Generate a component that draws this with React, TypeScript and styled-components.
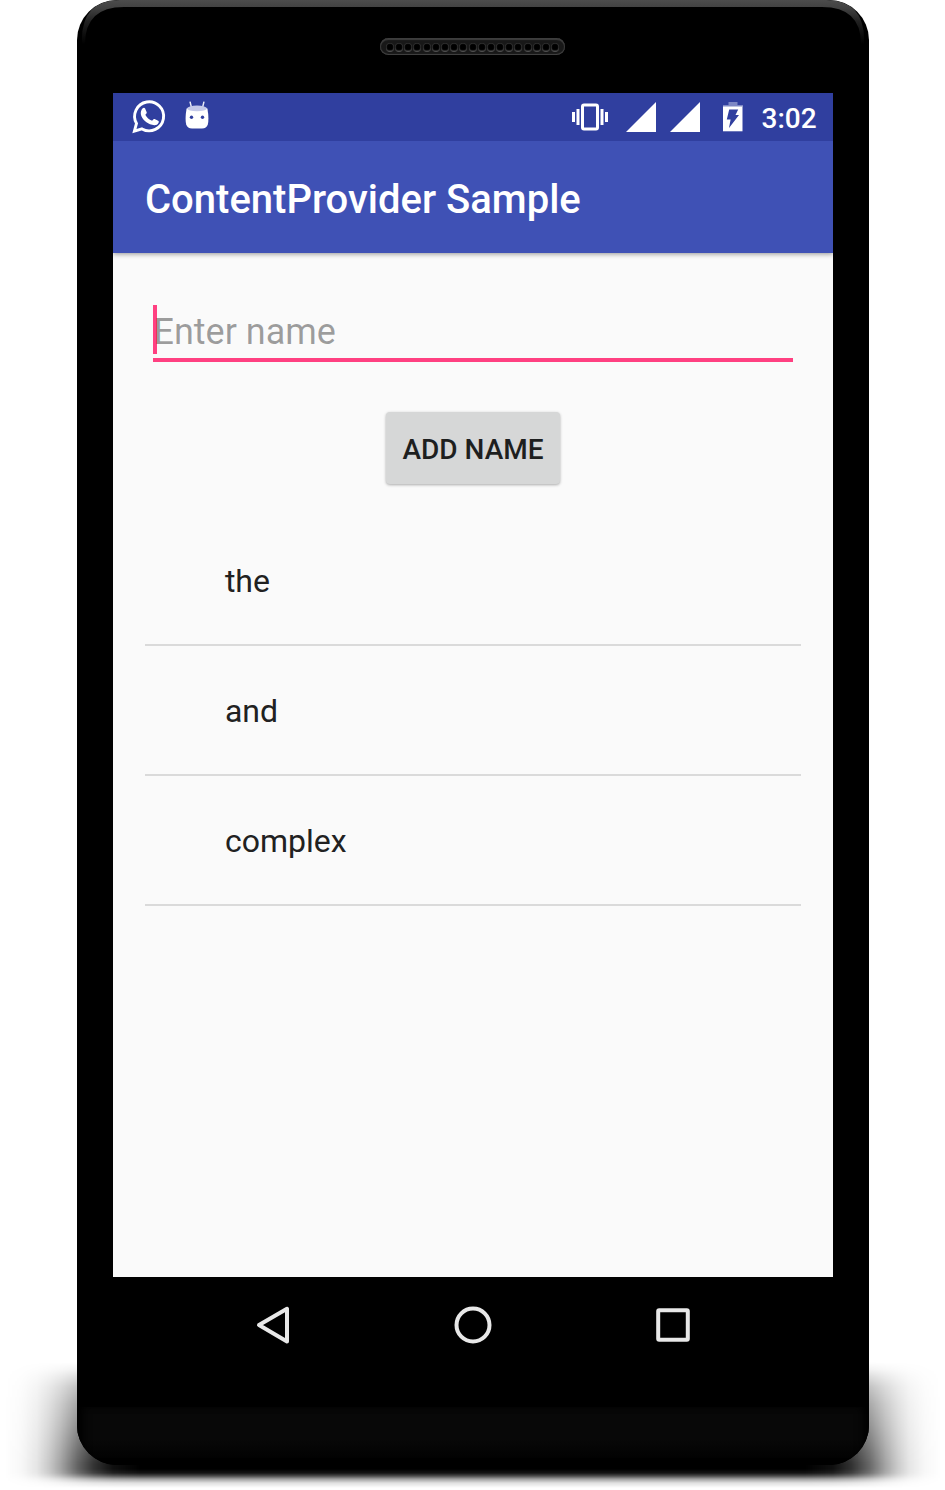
import React from "react";
import styled, { createGlobalStyle } from "styled-components";

const GlobalStyle = createGlobalStyle`
  *, *::before, *::after { box-sizing: border-box; }
  html, body { margin: 0; background: #fff; }
  body { font-family: Roboto, "Liberation Sans", sans-serif; overflow: hidden; }
`;

const Stage = styled.main`
  position: relative;
  display: flex;
  justify-content: center;
  width: 945px;
  height: 1490px;
  margin: 0 auto;
  background: #fff;
  overflow: hidden;
`;

const FloorShadow = styled.div`
  position: absolute;
  left: 0;
  right: 0;
  top: 1360px;
  height: 128px;
  background: linear-gradient(
    to right,
    rgba(0, 0, 0, 0) 5px,
    rgba(0, 0, 0, 0.03) 22px,
    rgba(0, 0, 0, 0.1) 37px,
    rgba(0, 0, 0, 0.21) 49px,
    rgba(0, 0, 0, 0.36) 61px,
    rgba(0, 0, 0, 0.6) 77px,
    rgba(0, 0, 0, 0.8) 94px,
    rgba(0, 0, 0, 0.94) 113px,
    #000 140px,
    #000 805px,
    rgba(0, 0, 0, 0.94) 833px,
    rgba(0, 0, 0, 0.8) 852px,
    rgba(0, 0, 0, 0.6) 869px,
    rgba(0, 0, 0, 0.36) 885px,
    rgba(0, 0, 0, 0.21) 897px,
    rgba(0, 0, 0, 0.1) 909px,
    rgba(0, 0, 0, 0.03) 924px,
    rgba(0, 0, 0, 0) 941px
  );
  mask-image: linear-gradient(
    to bottom,
    transparent 2px,
    rgba(0, 0, 0, 0.08) 9px,
    rgba(0, 0, 0, 0.23) 17px,
    rgba(0, 0, 0, 0.4) 27px,
    rgba(0, 0, 0, 0.57) 44px,
    rgba(0, 0, 0, 0.72) 66px,
    rgba(0, 0, 0, 0.92) 92px,
    #000 104px,
    #000 109px,
    rgba(0, 0, 0, 0.92) 113px,
    rgba(0, 0, 0, 0.7) 116px,
    rgba(0, 0, 0, 0.38) 119px,
    rgba(0, 0, 0, 0.12) 123px,
    transparent 128px
  );
`;

const Phone = styled.div`
  position: relative;
  display: flex;
  flex-direction: column;
  align-items: center;
  width: 792px;
  height: 1465px;
  border-radius: 40px;
  background: #000;
  overflow: hidden;
`;

const Earpiece = styled.div`
  display: flex;
  align-items: center;
  justify-content: center;
  width: 185px;
  height: 17px;
  margin: 38px 0;
  border-radius: 9px;
  background: #181818;
  box-shadow: inset 0 2px 1px #3d3d3d, inset 0 -1px 1px #444, inset 1px 0 1px #333,
    inset -1px 0 1px #333;
`;

const Hole = styled.i`
  flex: none;
  width: 8px;
  height: 8px;
  margin: 1px 0.6px 0;
  border-radius: 50%;
  background: #000;
  box-shadow: 0 1px 0 #505050, inset 0 0 1px 0.5px #484848;
`;

const Screen = styled.section`
  display: flex;
  flex-direction: column;
  width: 720px;
  height: 1184px;
  background: #fafafa;
`;

const StatusBar = styled.header`
  position: relative;
  z-index: 1;
  display: flex;
  align-items: center;
  justify-content: space-between;
  height: 48px;
  padding: 0 16px 0 18px;
  background: #303f9f;
  color: #fff;
`;

const StatusGroup = styled.div<{ $gap: number }>`
  display: flex;
  align-items: center;
  gap: ${({ $gap }) => $gap}px;
`;

const SignalPair = styled(StatusGroup)`
  margin-right: 5px;
`;

const Icon = styled.svg`
  display: block;
  flex: none;
`;

const Clock = styled.span`
  width: 55px;
  padding-top: 3px;
  font-size: 28px;
  font-weight: 500;
  line-height: 34px;
  text-align: right;
  white-space: nowrap;
`;

const AppBar = styled.div`
  position: relative;
  display: flex;
  align-items: center;
  height: 112px;
  padding: 6px 32.5px 0;
  background: #3f51b5;
  box-shadow: 0 1px 5px rgba(0, 0, 0, 0.42);
`;

const Title = styled.h1`
  margin: 0;
  color: #fff;
  font-size: 40px;
  font-weight: 500;
  line-height: 48px;
`;

const Content = styled.div`
  display: flex;
  flex-direction: column;
  align-items: center;
  padding: 52px 32px 0;
`;

const NameField = styled.div`
  width: 640px;
  height: 57px;
  border-bottom: 4px solid #ff4081;
`;

const Hint = styled.div`
  height: 49px;
  padding-top: 6px;
  border-left: 4px solid #ff4081;
  color: rgba(0, 0, 0, 0.38);
  font-size: 36px;
  line-height: 42px;
  text-indent: -3px;
`;

const AddButton = styled.button`
  width: 174px;
  height: 72px;
  margin: 50px 0 32px;
  padding: 3px 0 0 1px;
  border: 0;
  border-radius: 4px;
  background: #d6d7d7;
  box-shadow: 0 1px 3px rgba(0, 0, 0, 0.32);
  color: #1e1f1f;
  font: 500 28px/34px Roboto, "Liberation Sans", sans-serif;
  white-space: nowrap;
`;

const NameList = styled.ul`
  align-self: stretch;
  margin: 0;
  padding: 0;
  list-style: none;
`;

const NameRow = styled.li`
  display: flex;
  align-items: center;
  height: 130px;
  padding: 2px 80.4px 0;
  border-bottom: 2px solid #dadada;
  color: #212121;
  font-size: 32px;
  line-height: 38px;
`;

const NavBar = styled.nav`
  display: flex;
  align-items: center;
  justify-content: space-between;
  width: 440px;
  height: 96px;
`;

const Chin = styled.div`
  align-self: stretch;
  height: 58px;
  margin-top: auto;
  background: linear-gradient(#080808 0%, #080808 55%, #000 100%);
  box-shadow: inset 9px 0 8px -3px #000, inset -9px 0 8px -3px #000;
`;

const TopGloss = styled(Icon)`
  position: absolute;
  left: 0;
  top: 0;
`;

const WhatsAppIcon = () => (
  <Icon width="36" height="36" viewBox="0 0 36 36">
    <path
      d="M3.4 32.2 5.5 24.4A14.5 14.5 0 1 1 11 29.9Z"
      fill="none"
      stroke="#fff"
      strokeWidth="2.9"
      strokeLinejoin="miter"
    />
    <path
      d="M11.7 9.2c.7-.7 2-.7 2.4.2l1.6 3.8c.2.6-.1 1.1-1.4 2.6 1.6 3 3.7 4.7 6.8 6 1.2-1.5 1.7-2.1 2.5-1.8l3.5 1.7c.8.4.8.9.5 2-.9 2.4-4 3-6.5 2.1-5.7-1.8-9.7-5.4-11.1-9.9-.7-2.6.2-5.1 1.7-6.7Z"
      fill="#fff"
    />
  </Icon>
);

const RobotIcon = () => (
  <Icon width="24" height="32" viewBox="0 0 24 32">
    <path d="m5 .6 1.5 6M19 .6l-1.5 6" stroke="#e8eaf6" strokeWidth="1.5" />
    <path
      d="M1.6 7.5Q12 3.5 22.4 7.5Q24.2 17.5 22.8 23.5Q21.5 27.4 17 27.6H7Q2.5 27.4 1.2 23.5Q-.2 17.5 1.6 7.5Z"
      fill="#fff"
    />
    <ellipse cx="12" cy="7.4" rx="10" ry="2.8" fill="#c5cae9" />
    <circle cx="6.5" cy="16.2" r="1.7" fill="#303f9f" />
    <circle cx="17.5" cy="16.2" r="1.7" fill="#303f9f" />
  </Icon>
);

const VibrateIcon = () => (
  <Icon width="36" height="28" viewBox="0 0 36 28" fill="#fff">
    <rect x="10.5" y="2" width="15" height="24" rx="1.5" fill="none" stroke="#fff" strokeWidth="3" />
    <path d="M0 9h3v10H0zM4.5 6h3v16h-3zM28.5 6h3v16h-3zM33 9h3v10h-3z" />
  </Icon>
);

const SignalIcon = () => (
  <Icon width="30" height="30" viewBox="0 0 30 30">
    <path d="M30 0V30H0Z" fill="#fff" />
  </Icon>
);

const BatteryIcon = () => (
  <Icon width="20" height="30" viewBox="0 0 20 30">
    <path d="M5.5 0h9v3H20v2H0V3h5.5z" fill="#7d87c4" />
    <path d="M0 4.5h19.5v24.8H0z" fill="#fff" />
    <path d="M6.2 7.5h9L12.5 13H16L6 26l1.6-8.5H3.8z" fill="#303f9f" />
  </Icon>
);

const names = ["the", "and", "complex"];

export default function App() {
  return (
    <>
      <GlobalStyle />
      <Stage>
        <FloorShadow />
        <Phone>
          <TopGloss width="792" height="48" viewBox="0 0 792 48" fill="none">
            <defs>
              <linearGradient id="gloss" x1="0" y1="0" x2="0" y2="1">
                <stop stopColor="#4c4c4c" />
                <stop offset=".2" stopColor="#404040" />
                <stop offset=".5" stopColor="#202020" />
                <stop offset="1" stopColor="#000" />
              </linearGradient>
            </defs>
            <path
              d="M5 44Q3 0 43 0H749Q789 0 787 44H784Q784 7 745 7H47Q8 7 8 44Z"
              fill="url(#gloss)"
            />
          </TopGloss>
          <Earpiece>
            {Array.from({ length: 19 }, (_, i) => (
              <Hole key={i} />
            ))}
          </Earpiece>
          <Screen>
            <StatusBar>
              <StatusGroup $gap={18}>
                <WhatsAppIcon />
                <RobotIcon />
              </StatusGroup>
              <StatusGroup $gap={18}>
                <VibrateIcon />
                <SignalPair $gap={14}>
                  <SignalIcon />
                  <SignalIcon />
                </SignalPair>
                <StatusGroup $gap={19}>
                  <BatteryIcon />
                  <Clock>3:02</Clock>
                </StatusGroup>
              </StatusGroup>
            </StatusBar>
            <AppBar>
              <Title>ContentProvider Sample</Title>
            </AppBar>
            <Content>
              <NameField>
                <Hint>Enter name</Hint>
              </NameField>
              <AddButton type="button">ADD NAME</AddButton>
              <NameList>
                {names.map((name) => (
                  <NameRow key={name}>{name}</NameRow>
                ))}
              </NameList>
            </Content>
          </Screen>
          <NavBar>
            <Icon width="40" height="40" viewBox="0 0 40 40">
              <path d="M34 3.8v32.6L6 20.1Z" fill="none" stroke="#e8e8e8" strokeWidth="4" strokeLinejoin="round" />
            </Icon>
            <Icon width="40" height="40" viewBox="0 0 40 40">
              <circle cx="20" cy="20" r="16.5" fill="none" stroke="#e8e8e8" strokeWidth="4" />
            </Icon>
            <Icon width="40" height="40" viewBox="0 0 40 40">
              <rect x="5.2" y="5.2" width="29.6" height="29.6" rx="1" fill="none" stroke="#e8e8e8" strokeWidth="4" />
            </Icon>
          </NavBar>
          <Chin />
        </Phone>
      </Stage>
    </>
  );
}
